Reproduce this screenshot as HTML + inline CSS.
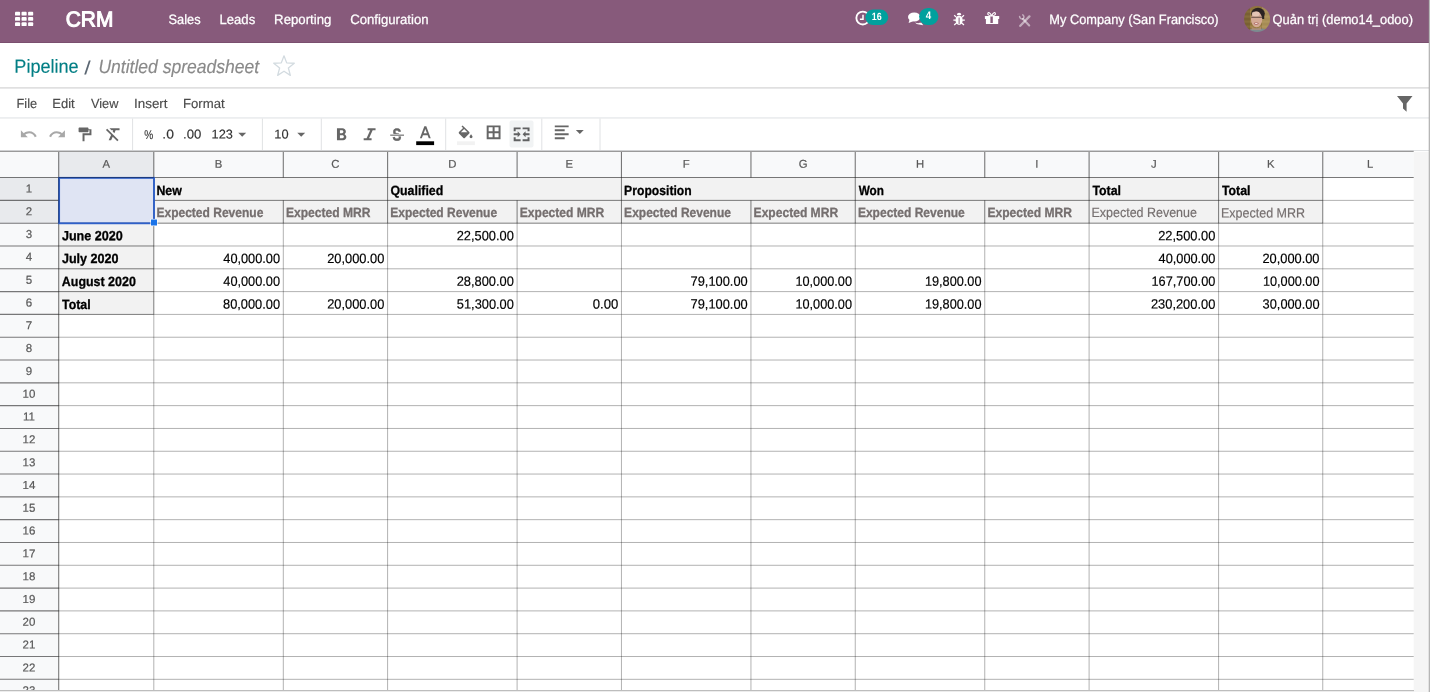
<!DOCTYPE html>
<html lang="en"><head><meta charset="utf-8"><title>Odoo - Untitled spreadsheet</title>
<style>
*{box-sizing:border-box}
html,body{margin:0;padding:0}
body{width:1430px;height:692px;overflow:hidden;background:#fff;position:relative;font-family:"Liberation Sans","DejaVu Sans",sans-serif;font-size:13px}
#app{position:absolute;left:0;top:0;width:1430px;height:692px;will-change:transform}
.t{position:absolute;white-space:nowrap;line-height:normal;transform-origin:0 0;display:block}
.ov{position:absolute;left:0;top:0;display:block;pointer-events:none}
.navbar{position:absolute;left:0;top:0;width:1429px;height:43px;background:#875a7b;border-bottom:1px solid #7a4f6f}
.badge{position:absolute;color:#fff;font-weight:bold;font-size:9.5px;white-space:nowrap;transform-origin:0 0}
.cp{position:absolute;left:0;top:43px;width:1429px;height:45px;background:#fff}
.cp-line{position:absolute;left:0;top:87px;width:1429px;height:2px;background:linear-gradient(#e0e0e0 0 50%,#e8e8e9 50% 100%)}
.menubar{position:absolute;left:0;top:88px;width:1429px;height:30px}
.menubar-line{position:absolute;left:0;top:117px;width:1429px;height:2px;background:linear-gradient(#eceef0 0 50%,#f0f1f2 50% 100%)}
.toolbar{position:absolute;left:0;top:118px;width:1429px;height:33px}
.toolbar-line{position:absolute;left:0;top:150px;width:1429px;height:1px;background:#e0e2e4}
.grid{position:absolute;left:0;top:150px;display:block}
.edge-r{position:absolute;left:1428px;top:0;width:2px;height:692px;background:linear-gradient(90deg,rgba(150,150,150,.22) 0 50%,#b6b6b6 50% 100%)}
.edge-t{position:absolute;left:1414px;top:690px;width:15px;height:2px;background:#f5f5f5}
.edge-b{position:absolute;left:0;top:690px;width:1414px;height:2px;background:linear-gradient(#bdbdbd 0 50%,#ececec 50% 100%)}
</style></head>
<body>
<div id="app">
<header class="navbar">
<svg class="ov" width="1430" height="43" viewBox="0 0 1430 43">
<rect x="15.0" y="11.8" width="5.1" height="3.8" rx="0.9" fill="#fff"/>
<rect x="15.0" y="17.05" width="5.1" height="3.8" rx="0.9" fill="#fff"/>
<rect x="15.0" y="22.3" width="5.1" height="3.8" rx="0.9" fill="#fff"/>
<rect x="21.55" y="11.8" width="5.1" height="3.8" rx="0.9" fill="#fff"/>
<rect x="21.55" y="17.05" width="5.1" height="3.8" rx="0.9" fill="#fff"/>
<rect x="21.55" y="22.3" width="5.1" height="3.8" rx="0.9" fill="#fff"/>
<rect x="28.1" y="11.8" width="5.1" height="3.8" rx="0.9" fill="#fff"/>
<rect x="28.1" y="17.05" width="5.1" height="3.8" rx="0.9" fill="#fff"/>
<rect x="28.1" y="22.3" width="5.1" height="3.8" rx="0.9" fill="#fff"/>
<circle cx="862.8" cy="18" r="6.45" fill="none" stroke="#fff" stroke-width="1.85"/>
<path d="M863 14.8V19.2H859.9" fill="none" stroke="#fff" stroke-width="1.5"/>
<rect x="865.4" y="9.6" width="22.8" height="15.5" rx="7.75" fill="#00a09d"/>
<g fill="#fff"><ellipse cx="914.2" cy="17" rx="6.2" ry="4.6"/><path d="M909.6 19.5 L908.6 23 L913 21.2Z"/><path d="M915 22.6 C917 23.4 920 23.2 921.2 22.6 L923.3 25.2 L919 24.6 C917.5 24.6 916 23.8 915 22.6Z"/></g>
<rect x="919.1" y="8.0" width="19.3" height="17.1" rx="8.6" fill="#00a09d"/>
<g fill="#fff" stroke="#fff"><ellipse cx="959.1" cy="20.2" rx="3.6" ry="4.7" stroke="none"/><path d="M956.9 14.9 a2.2 2.1 0 0 1 4.4 0Z" stroke="none"/><path d="M954.2 15.2 L956.8 17.6 M964 15.2 L961.4 17.6 M953.4 20.2 H956 M962.2 20.2 H964.8 M954.2 24.9 L956.8 22.8 M964 24.9 L961.4 22.8" stroke-width="1.25" fill="none"/><rect x="958.6" y="17.6" width="1.0" height="6.6" fill="#875a7b" stroke="none"/></g>
<g fill="#fff"><rect x="984.9" y="16" width="14.3" height="3.1" rx="0.4"/><rect x="985.9" y="19.1" width="12.3" height="4.8" rx="0.5"/><rect x="990.4" y="16.4" width="2.4" height="6.6" fill="#875a7b"/><path d="M991.6 15.8 C989 15.8 987.6 14.8 987.8 13.5 C988 12 990.2 12 991.6 15.8Z M991.6 15.8 C994.2 15.8 995.6 14.8 995.4 13.5 C995.2 12 993 12 991.6 15.8Z" fill="none" stroke="#fff" stroke-width="1.1"/></g>
<g stroke="#fff" stroke-opacity="0.5" fill="none" stroke-linecap="round"><path d="M1020.3 25.8 L1029.4 16.4" stroke-width="2.3"/><path d="M1023 19 L1029.2 25.4" stroke-width="2.1"/><path d="M1019.6 16.4 a2.4 2.4 0 0 0 3.7 2.1 a2.4 2.4 0 0 0 -0.5 -3.6" stroke-width="1.5"/></g>
<defs><clipPath id="av"><circle cx="1257.1" cy="19" r="13"/></clipPath><filter id="avb" x="-10%" y="-10%" width="120%" height="120%"><feGaussianBlur stdDeviation="0.7"/></filter></defs>
<g clip-path="url(#av)"><g filter="url(#avb)"><rect x="1242" y="4" width="31" height="31" fill="#8f733d"/><rect x="1242" y="10.5" width="31" height="2.2" fill="#b39655" opacity=".5"/><rect x="1242" y="15.5" width="31" height="2.2" fill="#b39655" opacity=".5"/><rect x="1242" y="20.5" width="31" height="2.2" fill="#b39655" opacity=".5"/><rect x="1242" y="25.5" width="31" height="2.2" fill="#b39655" opacity=".5"/><rect x="1262" y="4" width="11" height="31" fill="#c2aa74" opacity=".45"/><rect x="1242" y="4" width="8" height="31" fill="#4f3f22" opacity=".35"/><path d="M1246 35 C1247 29.5 1252 28 1257 28.5 C1263 28 1269 29.5 1272 35Z" fill="#7b8b90"/><ellipse cx="1258" cy="13.4" rx="6.8" ry="5.6" fill="#2b2420"/><rect x="1262" y="13" width="2.2" height="6" fill="#2b2420"/><ellipse cx="1256.6" cy="19.4" rx="5.6" ry="7.8" fill="#d4aa95"/><ellipse cx="1255.8" cy="14.0" rx="3.9" ry="2.4" fill="#e6c8b8" opacity=".9"/><path d="M1251.3 17.3 H1262.4" stroke="#3f322d" stroke-width="1.1" opacity=".7"/><ellipse cx="1256.2" cy="23.6" rx="2.5" ry="1.1" fill="#a85f5f"/><ellipse cx="1256.2" cy="23.4" rx="1.6" ry="0.5" fill="#f2e6e0"/><path d="M1251.6 26.4 C1254 28.8 1258.6 28.8 1261 26.4 L1261 30 L1251.6 30Z" fill="#b89079" opacity=".7"/></g></g>
</svg>
<a class="t brand" style="left:65px;top:6px;font-size:21.6px;color:#fff;transform:translate(0.79px,0.55px) rotate(0.03deg) scaleX(0.9660);-webkit-text-stroke:1.05px #fff">CRM</a>
<nav>
<a class="t" style="left:168px;top:11px;font-size:13.5px;color:#fff;transform:translate(0.51px,0.90px) rotate(0.03deg) scaleX(0.9496);-webkit-text-stroke:0.25px #fff">Sales</a>
<a class="t" style="left:219px;top:11px;font-size:13.5px;color:#fff;transform:translate(0.51px,0.90px) rotate(0.03deg) scaleX(0.9702);-webkit-text-stroke:0.25px #fff">Leads</a>
<a class="t" style="left:274px;top:11px;font-size:13.5px;color:#fff;transform:translate(0.10px,0.90px) rotate(0.03deg) scaleX(0.9784);-webkit-text-stroke:0.25px #fff">Reporting</a>
<a class="t" style="left:350px;top:11px;font-size:13.5px;color:#fff;transform:translate(0.19px,0.90px) rotate(0.03deg) scaleX(0.9762);-webkit-text-stroke:0.25px #fff">Configuration</a>
</nav>
<span class="t" style="left:871px;top:10px;font-size:10.4px;color:#fff;transform:translate(0.81px,0.70px) rotate(0.03deg) scaleX(0.8565);font-weight:bold">16</span>
<span class="t" style="left:925px;top:9px;font-size:10.8px;color:#fff;transform:translate(0.76px,0.00px) rotate(0.03deg) scaleX(0.9021);font-weight:bold">4</span>
<span class="t" style="left:1049px;top:11px;font-size:13.5px;color:#fff;transform:translate(0.33px,0.90px) rotate(0.03deg) scaleX(0.9478);-webkit-text-stroke:0.25px #fff">My Company (San Francisco)</span>
<span class="t" style="left:1272px;top:11px;font-size:13.5px;color:#fff;transform:translate(0.60px,0.90px) rotate(0.03deg) scaleX(0.9545);-webkit-text-stroke:0.25px #fff">Quản trị (demo14_odoo)</span>
</header>
<div class="cp">
</div>
<svg class="ov" width="1430" height="120" viewBox="0 0 1430 120"><polygon points="284.00,55.80 286.70,62.88 294.27,63.26 288.37,68.02 290.35,75.34 284.00,71.20 277.65,75.34 279.63,68.02 273.73,63.26 281.30,62.88" fill="none" stroke="#d3dbe0" stroke-width="1.3" stroke-linejoin="round"/><path d="M1397 96 H1412.5 L1406.6 103.4 V111.7 L1403 108.6 V103.4 Z" fill="#666"/></svg>
<span class="t" style="left:14px;top:55px;font-size:19px;color:#017e84;transform:translate(0.37px,0.80px) rotate(0.03deg) scaleX(0.9510);-webkit-text-stroke:0.15px #017e84">Pipeline</span>
<span class="t" style="left:84px;top:57px;font-size:19px;color:#5c6773;transform:translate(0.20px,0.30px) rotate(0.03deg) scaleX(1.2190)">/</span>
<span class="t" style="left:98px;top:55px;font-size:19px;color:#8a8a8a;transform:translate(0.43px,0.80px) rotate(0.03deg) scaleX(0.9227);-webkit-text-stroke:0.15px #8a8a8a;font-style:italic">Untitled spreadsheet</span>
<div class="cp-line"></div>
<div class="menubar">
</div>
<span class="t" style="left:16px;top:96px;font-size:13.2px;color:#4a4a4a;transform:translate(0.54px,0.10px) rotate(0.03deg) scaleX(0.9682);-webkit-text-stroke:0.15px #4a4a4a">File</span>
<span class="t" style="left:52px;top:96px;font-size:13.2px;color:#4a4a4a;transform:translate(0.32px,0.10px) rotate(0.03deg) scaleX(0.9850);-webkit-text-stroke:0.15px #4a4a4a">Edit</span>
<span class="t" style="left:91px;top:96px;font-size:13.2px;color:#4a4a4a;transform:translate(0.00px,0.10px) rotate(0.03deg) scaleX(0.9656);-webkit-text-stroke:0.15px #4a4a4a">View</span>
<span class="t" style="left:134px;top:96px;font-size:13.2px;color:#4a4a4a;transform:translate(0.06px,0.10px) rotate(0.03deg) scaleX(1.0142);-webkit-text-stroke:0.15px #4a4a4a">Insert</span>
<span class="t" style="left:183px;top:96px;font-size:13.2px;color:#4a4a4a;transform:translate(0.00px,0.10px) rotate(0.03deg) scaleX(0.9969);-webkit-text-stroke:0.15px #4a4a4a">Format</span>
<div class="menubar-line"></div>
<div class="toolbar"></div>
<svg class="ov" style="top:118px" width="1430" height="33" viewBox="0 118 1430 33">
<rect x="509.5" y="120.4" width="24" height="27.2" rx="2" fill="#f1f3f4"/>
<g transform="translate(19.9 125.4) scale(0.99)" fill="#000" fill-opacity="0.34"><path d="M11.5656391,4.43436088 L9,7 L16,7 L16,0 L13.0418424,2.95815758 C11.5936787,1.73635959 9.72260775,1 7.67955083,1 C4.22126258,1 1.25575599,3.10984908 0,6 L2,7 C2.93658775,4.60974406 5.12943697,3.08011229 7.67955083,3 C9.14881247,3.0528747 10.4994783,3.57862053 11.5656391,4.43436088 Z" transform="matrix(-1 0 0 1 17 5)"/></g>
<g transform="translate(48.1 125.4) scale(0.99)" fill="#000" fill-opacity="0.34"><path d="M11.5656391,4.43436088 L9,7 L16,7 L16,0 L13.0418424,2.95815758 C11.5936787,1.73635959 9.72260775,1 7.67955083,1 C4.22126258,1 1.25575599,3.10984908 0,6 L2,7 C2.93658775,4.60974406 5.12943697,3.08011229 7.67955083,3 C9.14881247,3.0528747 10.4994783,3.57862053 11.5656391,4.43436088 Z" transform="translate(1 5)"/></g>
<g transform="translate(75.6 125.4) scale(0.99)" fill="#000" fill-opacity="0.6"><path d="M9,0 L1,0 C0.45,0 0,0.45 0,1 L0,4 C0,4.55 0.45,5 1,5 L9,5 C9.55,5 10,4.55 10,4 L10,3 L11,3 L11,6 L4,6 L4,14 L6,14 L6,8 L13,8 L13,2 L10,2 L10,1 C10,0.45 9.55,0 9,0 Z" transform="translate(3 2)"/></g>
<g transform="translate(103.7 125.4) scale(0.99)" fill="#000" fill-opacity="0.6"><path d="M0.27,1.55 L5.43,6.7 L3,12 L5.5,12 L7.14,8.42 L11.73,13 L13,11.73 L1.55,0.27 L0.27,1.55 Z M3.82,0 L5.82,2 L7.58,2 L7.03,3.21 L8.74,4.92 L10.08,2 L14,2 L14,0 L3.82,0 Z" transform="translate(2 3)"/></g>
<g transform="translate(233.3 125.8) scale(0.99)" fill="#000" fill-opacity="0.6"><polygon points="0 0 4 4 8 0" transform="translate(5 7)"/></g>
<g transform="translate(292.3 125.8) scale(0.99)" fill="#000" fill-opacity="0.6"><polygon points="0 0 4 4 8 0" transform="translate(5 7)"/></g>
<g transform="translate(333.0 125.4) scale(0.99)" fill="#000" fill-opacity="0.6"><path fill-rule="evenodd" d="M9,3.5 C9,1.57 7.43,0 5.5,0 L0,0 L0,12 L6.25,12 C8.04,12 9.5,10.54 9.5,8.75 C9.5,7.45 8.73,6.34 7.63,5.82 C8.46,5.24 9,4.38 9,3.5 Z M5,2 C5.83,2 6.5,2.67 6.5,3.5 C6.5,4.33 5.83,5 5,5 L3,5 L3,2 L5,2 Z M3,10 L3,7 L5.5,7 C6.33,7 7,7.67 7,8.5 C7,9.33 6.33,10 5.5,10 L3,10 Z" transform="translate(4 3)"/></g>
<g transform="translate(360.7 125.4) scale(0.99)" fill="#000" fill-opacity="0.6"><polygon fill-rule="evenodd" points="4 0 4 2 6.58 2 2.92 10 0 10 0 12 8 12 8 10 5.42 10 9.08 2 12 2 12 0" transform="translate(3 3)"/></g>
<text x="397.1" y="140.4" text-anchor="middle" font-family="Liberation Sans, DejaVu Sans, sans-serif" font-weight="bold" font-size="17.2" fill="#666" stroke="#666" stroke-width="0.5" transform="translate(397.1 0) scale(0.78 1) rotate(0.03) translate(-397.1 0)">S</text>
<rect x="390.2" y="133.9" width="13.8" height="2.5" fill="#fff"/>
<rect x="390.2" y="134.6" width="13.8" height="1.1" fill="#666"/>
<g transform="translate(416.4 125.3) scale(0.99)" fill="#000" fill-opacity="0.6"><path d="M7,0 L5,0 L0.5,12 L2.5,12 L3.62,9 L8.37,9 L9.49,12 L11.49,12 L7,0 Z M4.38,7 L6,2.67 L7.62,7 L4.38,7 Z" transform="translate(3 1)"/></g>
<rect x="416.2" y="141.3" width="17.9" height="3.8" fill="#000"/>
<g transform="translate(456.7 125.4) scale(0.99)" fill="#000" fill-opacity="0.6"><path d="M14.5,8.87 C14.5,8.87 13,10.49 13,11.49 C13,12.32 13.67,12.99 14.5,12.99 C15.33,12.99 16,12.32 16,11.49 C16,10.5 14.5,8.87 14.5,8.87 Z M12.71,6.79 L5.91,0 L4.85,1.06 L6.44,2.65 L2.29,6.79 C1.9,7.18 1.9,7.81 2.29,8.2 L6.79,12.7 C6.99,12.9 7.24,13 7.5,13 C7.76,13 8.01,12.9 8.21,12.71 L12.71,8.21 C13.1,7.82 13.1,7.18 12.71,6.79 Z M4.21,7 L7.5,3.71 L10.79,7 L4.21,7 Z"/></g>
<rect x="457.0" y="141.3" width="17.9" height="3.8" fill="#f2f2f2"/>
<g transform="translate(484.7 123.4) scale(0.99)" fill="#000" fill-opacity="0.6"><path d="M0,0 L0,14 L14,14 L14,0 L0,0 Z M6,12 L2,12 L2,8 L6,8 L6,12 Z M6,6 L2,6 L2,2 L6,2 L6,6 Z M12,12 L8,12 L8,8 L12,8 L12,12 Z M12,6 L8,6 L8,2 L12,2 L12,6 Z" transform="translate(2 2)"/></g>
<g transform="translate(512.7 125.4) scale(0.99)" fill="#000" fill-opacity="0.6"><path d="M3,6 L1,6 L1,2 L8,2 L8,4 L3,4 L3,6 Z M10,4 L10,2 L17,2 L17,6 L15,6 L15,4 L10,4 Z M10,14 L15,14 L15,12 L17,12 L17,16 L10,16 L10,14 Z M1,12 L3,12 L3,14 L8,14 L8,16 L1,16 L1,12 Z M1,8 L5,8 L5,6 L8,9 L5,12 L5,10 L1,10 L1,8 Z M10,9 L13,6 L13,8 L17,8 L17,10 L13,10 L13,12 L10,9 Z"/></g>
<g transform="translate(552.8 123.4) scale(0.99)" fill="#000" fill-opacity="0.6"><path d="M0,14 L10,14 L10,12 L0,12 L0,14 Z M10,4 L0,4 L0,6 L10,6 L10,4 Z M0,0 L0,2 L14,2 L14,0 L0,0 Z M0,10 L14,10 L14,8 L0,8 L0,10 Z" transform="translate(2 2)"/></g>
<g transform="translate(570.9 123.0) scale(0.99)" fill="#000" fill-opacity="0.6"><polygon points="0 0 4 4 8 0" transform="translate(5 7)"/></g>
<line x1="132.6" y1="118.5" x2="132.6" y2="150.5" stroke="#e0e2e4" stroke-width="1"/>
<line x1="262.4" y1="118.5" x2="262.4" y2="150.5" stroke="#e0e2e4" stroke-width="1"/>
<line x1="321.3" y1="118.5" x2="321.3" y2="150.5" stroke="#e0e2e4" stroke-width="1"/>
<line x1="445.7" y1="118.5" x2="445.7" y2="150.5" stroke="#e0e2e4" stroke-width="1"/>
<line x1="541.8" y1="118.5" x2="541.8" y2="150.5" stroke="#e0e2e4" stroke-width="1"/>
<line x1="600.0" y1="118.5" x2="600.0" y2="150.5" stroke="#e0e2e4" stroke-width="1"/>
</svg>
<span class="t" style="left:144px;top:126px;font-size:12.8px;color:#333;transform:translate(0.38px,0.50px) rotate(0.03deg) scaleX(0.7905);-webkit-text-stroke:0.15px #333">%</span>
<span class="t" style="left:162px;top:126px;font-size:12.8px;color:#333;transform:translate(0.35px,0.50px) rotate(0.03deg) scaleX(1.0889);-webkit-text-stroke:0.15px #333">.0</span>
<span class="t" style="left:183px;top:126px;font-size:12.8px;color:#333;transform:translate(0.12px,0.50px) rotate(0.03deg) scaleX(1.0295);-webkit-text-stroke:0.15px #333">.00</span>
<span class="t" style="left:211px;top:126px;font-size:12.8px;color:#333;transform:translate(0.60px,0.50px) rotate(0.03deg) scaleX(1.0013);-webkit-text-stroke:0.15px #333">123</span>
<span class="t" style="left:274px;top:126px;font-size:12.8px;color:#333;transform:translate(0.30px,0.50px) rotate(0.03deg) scaleX(1.0019);-webkit-text-stroke:0.15px #333">10</span>
<div class="toolbar-line"></div>
<svg class="grid" width="1430" height="540" viewBox="0 150 1430 540" font-family="Liberation Sans, DejaVu Sans, sans-serif">
<rect x="0" y="151.8" width="1413.7" height="25.769999999999982" fill="#f8f9fa"/>
<rect x="0" y="177.57" width="58.7" height="514.4300000000001" fill="#f8f9fa"/>
<rect x="58.7" y="151.8" width="95.10000000000001" height="25.769999999999982" fill="#e8eaed"/>
<rect x="0" y="177.57" width="58.7" height="45.614" fill="#e8eaed"/>
<rect x="58.7" y="177.57" width="95.10000000000001" height="136.84199999999998" fill="#f2f2f2"/>
<rect x="153.8" y="177.57" width="1168.95" height="45.614" fill="#f2f2f2"/>
<rect x="58.7" y="177.57" width="95.10000000000001" height="45.614" fill="#dfe4f3"/>
<rect x="1413.7" y="151.8" width="15.0" height="540.2" fill="#f5f5f5"/>
<line x1="0" y1="177.57" x2="1413.7" y2="177.57" stroke="#000" stroke-opacity="0.52" stroke-width="1.1"/>
<line x1="0" y1="200.38" x2="58.7" y2="200.38" stroke="#000" stroke-opacity="0.52" stroke-width="1.1"/>
<line x1="153.8" y1="200.38" x2="1322.75" y2="200.38" stroke="#000" stroke-opacity="0.50" stroke-width="1"/>
<line x1="1322.75" y1="200.38" x2="1413.7" y2="200.38" stroke="#000" stroke-opacity="0.56" stroke-width="0.55"/>
<line x1="0" y1="223.18" x2="58.7" y2="223.18" stroke="#000" stroke-opacity="0.52" stroke-width="1.1"/>
<line x1="58.7" y1="223.18" x2="153.8" y2="223.18" stroke="#000" stroke-opacity="0.50" stroke-width="1"/>
<line x1="153.8" y1="223.18" x2="1322.75" y2="223.18" stroke="#000" stroke-opacity="0.50" stroke-width="1"/>
<line x1="1322.75" y1="223.18" x2="1413.7" y2="223.18" stroke="#000" stroke-opacity="0.56" stroke-width="0.55"/>
<line x1="0" y1="245.99" x2="58.7" y2="245.99" stroke="#000" stroke-opacity="0.52" stroke-width="1.1"/>
<line x1="58.7" y1="245.99" x2="153.8" y2="245.99" stroke="#000" stroke-opacity="0.50" stroke-width="1"/>
<line x1="153.8" y1="245.99" x2="1322.75" y2="245.99" stroke="#000" stroke-opacity="0.56" stroke-width="0.55"/>
<line x1="1322.75" y1="245.99" x2="1413.7" y2="245.99" stroke="#000" stroke-opacity="0.56" stroke-width="0.55"/>
<line x1="0" y1="268.80" x2="58.7" y2="268.80" stroke="#000" stroke-opacity="0.52" stroke-width="1.1"/>
<line x1="58.7" y1="268.80" x2="153.8" y2="268.80" stroke="#000" stroke-opacity="0.50" stroke-width="1"/>
<line x1="153.8" y1="268.80" x2="1322.75" y2="268.80" stroke="#000" stroke-opacity="0.56" stroke-width="0.55"/>
<line x1="1322.75" y1="268.80" x2="1413.7" y2="268.80" stroke="#000" stroke-opacity="0.56" stroke-width="0.55"/>
<line x1="0" y1="291.61" x2="58.7" y2="291.61" stroke="#000" stroke-opacity="0.52" stroke-width="1.1"/>
<line x1="58.7" y1="291.61" x2="153.8" y2="291.61" stroke="#000" stroke-opacity="0.50" stroke-width="1"/>
<line x1="153.8" y1="291.61" x2="1322.75" y2="291.61" stroke="#000" stroke-opacity="0.56" stroke-width="0.55"/>
<line x1="1322.75" y1="291.61" x2="1413.7" y2="291.61" stroke="#000" stroke-opacity="0.56" stroke-width="0.55"/>
<line x1="0" y1="314.41" x2="58.7" y2="314.41" stroke="#000" stroke-opacity="0.52" stroke-width="1.1"/>
<line x1="58.7" y1="314.41" x2="153.8" y2="314.41" stroke="#000" stroke-opacity="0.50" stroke-width="1"/>
<line x1="153.8" y1="314.41" x2="1322.75" y2="314.41" stroke="#000" stroke-opacity="0.56" stroke-width="0.55"/>
<line x1="1322.75" y1="314.41" x2="1413.7" y2="314.41" stroke="#000" stroke-opacity="0.56" stroke-width="0.55"/>
<line x1="0" y1="337.22" x2="58.7" y2="337.22" stroke="#000" stroke-opacity="0.52" stroke-width="1.1"/>
<line x1="58.7" y1="337.22" x2="1413.7" y2="337.22" stroke="#000" stroke-opacity="0.56" stroke-width="0.55"/>
<line x1="0" y1="360.03" x2="58.7" y2="360.03" stroke="#000" stroke-opacity="0.52" stroke-width="1.1"/>
<line x1="58.7" y1="360.03" x2="1413.7" y2="360.03" stroke="#000" stroke-opacity="0.56" stroke-width="0.55"/>
<line x1="0" y1="382.83" x2="58.7" y2="382.83" stroke="#000" stroke-opacity="0.52" stroke-width="1.1"/>
<line x1="58.7" y1="382.83" x2="1413.7" y2="382.83" stroke="#000" stroke-opacity="0.56" stroke-width="0.55"/>
<line x1="0" y1="405.64" x2="58.7" y2="405.64" stroke="#000" stroke-opacity="0.52" stroke-width="1.1"/>
<line x1="58.7" y1="405.64" x2="1413.7" y2="405.64" stroke="#000" stroke-opacity="0.56" stroke-width="0.55"/>
<line x1="0" y1="428.45" x2="58.7" y2="428.45" stroke="#000" stroke-opacity="0.52" stroke-width="1.1"/>
<line x1="58.7" y1="428.45" x2="1413.7" y2="428.45" stroke="#000" stroke-opacity="0.56" stroke-width="0.55"/>
<line x1="0" y1="451.25" x2="58.7" y2="451.25" stroke="#000" stroke-opacity="0.52" stroke-width="1.1"/>
<line x1="58.7" y1="451.25" x2="1413.7" y2="451.25" stroke="#000" stroke-opacity="0.56" stroke-width="0.55"/>
<line x1="0" y1="474.06" x2="58.7" y2="474.06" stroke="#000" stroke-opacity="0.52" stroke-width="1.1"/>
<line x1="58.7" y1="474.06" x2="1413.7" y2="474.06" stroke="#000" stroke-opacity="0.56" stroke-width="0.55"/>
<line x1="0" y1="496.87" x2="58.7" y2="496.87" stroke="#000" stroke-opacity="0.52" stroke-width="1.1"/>
<line x1="58.7" y1="496.87" x2="1413.7" y2="496.87" stroke="#000" stroke-opacity="0.56" stroke-width="0.55"/>
<line x1="0" y1="519.67" x2="58.7" y2="519.67" stroke="#000" stroke-opacity="0.52" stroke-width="1.1"/>
<line x1="58.7" y1="519.67" x2="1413.7" y2="519.67" stroke="#000" stroke-opacity="0.56" stroke-width="0.55"/>
<line x1="0" y1="542.48" x2="58.7" y2="542.48" stroke="#000" stroke-opacity="0.52" stroke-width="1.1"/>
<line x1="58.7" y1="542.48" x2="1413.7" y2="542.48" stroke="#000" stroke-opacity="0.56" stroke-width="0.55"/>
<line x1="0" y1="565.29" x2="58.7" y2="565.29" stroke="#000" stroke-opacity="0.52" stroke-width="1.1"/>
<line x1="58.7" y1="565.29" x2="1413.7" y2="565.29" stroke="#000" stroke-opacity="0.56" stroke-width="0.55"/>
<line x1="0" y1="588.10" x2="58.7" y2="588.10" stroke="#000" stroke-opacity="0.52" stroke-width="1.1"/>
<line x1="58.7" y1="588.10" x2="1413.7" y2="588.10" stroke="#000" stroke-opacity="0.56" stroke-width="0.55"/>
<line x1="0" y1="610.90" x2="58.7" y2="610.90" stroke="#000" stroke-opacity="0.52" stroke-width="1.1"/>
<line x1="58.7" y1="610.90" x2="1413.7" y2="610.90" stroke="#000" stroke-opacity="0.56" stroke-width="0.55"/>
<line x1="0" y1="633.71" x2="58.7" y2="633.71" stroke="#000" stroke-opacity="0.52" stroke-width="1.1"/>
<line x1="58.7" y1="633.71" x2="1413.7" y2="633.71" stroke="#000" stroke-opacity="0.56" stroke-width="0.55"/>
<line x1="0" y1="656.52" x2="58.7" y2="656.52" stroke="#000" stroke-opacity="0.52" stroke-width="1.1"/>
<line x1="58.7" y1="656.52" x2="1413.7" y2="656.52" stroke="#000" stroke-opacity="0.56" stroke-width="0.55"/>
<line x1="0" y1="679.32" x2="58.7" y2="679.32" stroke="#000" stroke-opacity="0.52" stroke-width="1.1"/>
<line x1="58.7" y1="679.32" x2="1413.7" y2="679.32" stroke="#000" stroke-opacity="0.56" stroke-width="0.55"/>
<line x1="58.7" y1="151.8" x2="58.7" y2="177.57" stroke="#000" stroke-opacity="0.52" stroke-width="1.1"/>
<line x1="58.7" y1="177.57" x2="58.7" y2="692" stroke="#000" stroke-opacity="0.52" stroke-width="1.1"/>
<line x1="153.8" y1="151.8" x2="153.8" y2="177.57" stroke="#000" stroke-opacity="0.52" stroke-width="1.1"/>
<line x1="153.8" y1="177.57" x2="153.8" y2="200.38" stroke="#000" stroke-opacity="0.50" stroke-width="1"/>
<line x1="153.8" y1="200.38" x2="153.8" y2="223.18" stroke="#000" stroke-opacity="0.50" stroke-width="1"/>
<line x1="153.8" y1="223.18" x2="153.8" y2="314.41" stroke="#000" stroke-opacity="0.50" stroke-width="1"/>
<line x1="153.8" y1="314.41" x2="153.8" y2="692" stroke="#000" stroke-opacity="0.56" stroke-width="0.55"/>
<line x1="283.3" y1="151.8" x2="283.3" y2="177.57" stroke="#000" stroke-opacity="0.52" stroke-width="1.1"/>
<line x1="283.3" y1="200.38" x2="283.3" y2="223.18" stroke="#000" stroke-opacity="0.50" stroke-width="1"/>
<line x1="283.3" y1="223.18" x2="283.3" y2="314.41" stroke="#000" stroke-opacity="0.56" stroke-width="0.55"/>
<line x1="283.3" y1="314.41" x2="283.3" y2="692" stroke="#000" stroke-opacity="0.56" stroke-width="0.55"/>
<line x1="387.6" y1="151.8" x2="387.6" y2="177.57" stroke="#000" stroke-opacity="0.52" stroke-width="1.1"/>
<line x1="387.6" y1="177.57" x2="387.6" y2="200.38" stroke="#000" stroke-opacity="0.50" stroke-width="1"/>
<line x1="387.6" y1="200.38" x2="387.6" y2="223.18" stroke="#000" stroke-opacity="0.50" stroke-width="1"/>
<line x1="387.6" y1="223.18" x2="387.6" y2="314.41" stroke="#000" stroke-opacity="0.56" stroke-width="0.55"/>
<line x1="387.6" y1="314.41" x2="387.6" y2="692" stroke="#000" stroke-opacity="0.56" stroke-width="0.55"/>
<line x1="517.1" y1="151.8" x2="517.1" y2="177.57" stroke="#000" stroke-opacity="0.52" stroke-width="1.1"/>
<line x1="517.1" y1="200.38" x2="517.1" y2="223.18" stroke="#000" stroke-opacity="0.50" stroke-width="1"/>
<line x1="517.1" y1="223.18" x2="517.1" y2="314.41" stroke="#000" stroke-opacity="0.56" stroke-width="0.55"/>
<line x1="517.1" y1="314.41" x2="517.1" y2="692" stroke="#000" stroke-opacity="0.56" stroke-width="0.55"/>
<line x1="621.45" y1="151.8" x2="621.45" y2="177.57" stroke="#000" stroke-opacity="0.52" stroke-width="1.1"/>
<line x1="621.45" y1="177.57" x2="621.45" y2="200.38" stroke="#000" stroke-opacity="0.50" stroke-width="1"/>
<line x1="621.45" y1="200.38" x2="621.45" y2="223.18" stroke="#000" stroke-opacity="0.50" stroke-width="1"/>
<line x1="621.45" y1="223.18" x2="621.45" y2="314.41" stroke="#000" stroke-opacity="0.56" stroke-width="0.55"/>
<line x1="621.45" y1="314.41" x2="621.45" y2="692" stroke="#000" stroke-opacity="0.56" stroke-width="0.55"/>
<line x1="750.95" y1="151.8" x2="750.95" y2="177.57" stroke="#000" stroke-opacity="0.52" stroke-width="1.1"/>
<line x1="750.95" y1="200.38" x2="750.95" y2="223.18" stroke="#000" stroke-opacity="0.50" stroke-width="1"/>
<line x1="750.95" y1="223.18" x2="750.95" y2="314.41" stroke="#000" stroke-opacity="0.56" stroke-width="0.55"/>
<line x1="750.95" y1="314.41" x2="750.95" y2="692" stroke="#000" stroke-opacity="0.56" stroke-width="0.55"/>
<line x1="855.25" y1="151.8" x2="855.25" y2="177.57" stroke="#000" stroke-opacity="0.52" stroke-width="1.1"/>
<line x1="855.25" y1="177.57" x2="855.25" y2="200.38" stroke="#000" stroke-opacity="0.50" stroke-width="1"/>
<line x1="855.25" y1="200.38" x2="855.25" y2="223.18" stroke="#000" stroke-opacity="0.50" stroke-width="1"/>
<line x1="855.25" y1="223.18" x2="855.25" y2="314.41" stroke="#000" stroke-opacity="0.56" stroke-width="0.55"/>
<line x1="855.25" y1="314.41" x2="855.25" y2="692" stroke="#000" stroke-opacity="0.56" stroke-width="0.55"/>
<line x1="984.75" y1="151.8" x2="984.75" y2="177.57" stroke="#000" stroke-opacity="0.52" stroke-width="1.1"/>
<line x1="984.75" y1="200.38" x2="984.75" y2="223.18" stroke="#000" stroke-opacity="0.50" stroke-width="1"/>
<line x1="984.75" y1="223.18" x2="984.75" y2="314.41" stroke="#000" stroke-opacity="0.56" stroke-width="0.55"/>
<line x1="984.75" y1="314.41" x2="984.75" y2="692" stroke="#000" stroke-opacity="0.56" stroke-width="0.55"/>
<line x1="1089.1" y1="151.8" x2="1089.1" y2="177.57" stroke="#000" stroke-opacity="0.52" stroke-width="1.1"/>
<line x1="1089.1" y1="177.57" x2="1089.1" y2="200.38" stroke="#000" stroke-opacity="0.50" stroke-width="1"/>
<line x1="1089.1" y1="200.38" x2="1089.1" y2="223.18" stroke="#000" stroke-opacity="0.50" stroke-width="1"/>
<line x1="1089.1" y1="223.18" x2="1089.1" y2="314.41" stroke="#000" stroke-opacity="0.56" stroke-width="0.55"/>
<line x1="1089.1" y1="314.41" x2="1089.1" y2="692" stroke="#000" stroke-opacity="0.56" stroke-width="0.55"/>
<line x1="1218.6" y1="151.8" x2="1218.6" y2="177.57" stroke="#000" stroke-opacity="0.52" stroke-width="1.1"/>
<line x1="1218.6" y1="177.57" x2="1218.6" y2="200.38" stroke="#000" stroke-opacity="0.50" stroke-width="1"/>
<line x1="1218.6" y1="200.38" x2="1218.6" y2="223.18" stroke="#000" stroke-opacity="0.50" stroke-width="1"/>
<line x1="1218.6" y1="223.18" x2="1218.6" y2="314.41" stroke="#000" stroke-opacity="0.56" stroke-width="0.55"/>
<line x1="1218.6" y1="314.41" x2="1218.6" y2="692" stroke="#000" stroke-opacity="0.56" stroke-width="0.55"/>
<line x1="1322.75" y1="151.8" x2="1322.75" y2="177.57" stroke="#000" stroke-opacity="0.52" stroke-width="1.1"/>
<line x1="1322.75" y1="177.57" x2="1322.75" y2="200.38" stroke="#000" stroke-opacity="0.50" stroke-width="1"/>
<line x1="1322.75" y1="200.38" x2="1322.75" y2="223.18" stroke="#000" stroke-opacity="0.50" stroke-width="1"/>
<line x1="1322.75" y1="223.18" x2="1322.75" y2="314.41" stroke="#000" stroke-opacity="0.56" stroke-width="0.55"/>
<line x1="1322.75" y1="314.41" x2="1322.75" y2="692" stroke="#000" stroke-opacity="0.56" stroke-width="0.55"/>
<line x1="0" y1="151.4" x2="1413.7" y2="151.4" stroke="#9a9a9a" stroke-width="1.1"/>
<rect x="59.1" y="177.87" width="94.9" height="45.413999999999994" fill="none" stroke="#2f60c8" stroke-width="1.9"/>
<line x1="58.7" y1="177.57" x2="153.8" y2="177.57" stroke="#000" stroke-opacity="0.38" stroke-width="1.1"/>
<line x1="58.7" y1="177.57" x2="58.7" y2="223.184" stroke="#000" stroke-opacity="0.3" stroke-width="1.1"/>
<rect x="150.4" y="218.9" width="7.2" height="7.2" fill="#fff"/>
<rect x="151.0" y="219.5" width="6.0" height="6.0" fill="#1a73e8"/>
<text x="156.44" y="194.57" transform="rotate(0.03 156.44 194.57)" textLength="25.42" lengthAdjust="spacingAndGlyphs" font-size="13.4" fill="#000" font-weight="bold" stroke="#000" stroke-width="0.3">New</text>
<text x="390.47" y="194.57" transform="rotate(0.03 390.47 194.57)" textLength="52.80" lengthAdjust="spacingAndGlyphs" font-size="13.4" fill="#000" font-weight="bold" stroke="#000" stroke-width="0.3">Qualified</text>
<text x="624.10" y="194.57" transform="rotate(0.03 624.10 194.57)" textLength="67.59" lengthAdjust="spacingAndGlyphs" font-size="13.4" fill="#000" font-weight="bold" stroke="#000" stroke-width="0.3">Proposition</text>
<text x="858.69" y="194.57" transform="rotate(0.03 858.69 194.57)" textLength="25.26" lengthAdjust="spacingAndGlyphs" font-size="13.4" fill="#000" font-weight="bold" stroke="#000" stroke-width="0.3">Won</text>
<text x="1092.43" y="194.57" transform="rotate(0.03 1092.43 194.57)" textLength="28.62" lengthAdjust="spacingAndGlyphs" font-size="13.4" fill="#000" font-weight="bold" stroke="#000" stroke-width="0.3">Total</text>
<text x="1221.93" y="194.57" transform="rotate(0.03 1221.93 194.57)" textLength="28.62" lengthAdjust="spacingAndGlyphs" font-size="13.4" fill="#000" font-weight="bold" stroke="#000" stroke-width="0.3">Total</text>
<text x="156.46" y="217.38" transform="rotate(0.03 156.46 217.38)" textLength="106.88" lengthAdjust="spacingAndGlyphs" font-size="13.4" fill="#756f6f" font-weight="bold" stroke="#756f6f" stroke-width="0.3">Expected Revenue</text>
<text x="285.96" y="217.38" transform="rotate(0.03 285.96 217.38)" textLength="84.51" lengthAdjust="spacingAndGlyphs" font-size="13.4" fill="#756f6f" font-weight="bold" stroke="#756f6f" stroke-width="0.3">Expected MRR</text>
<text x="390.26" y="217.38" transform="rotate(0.03 390.26 217.38)" textLength="106.88" lengthAdjust="spacingAndGlyphs" font-size="13.4" fill="#756f6f" font-weight="bold" stroke="#756f6f" stroke-width="0.3">Expected Revenue</text>
<text x="519.76" y="217.38" transform="rotate(0.03 519.76 217.38)" textLength="84.51" lengthAdjust="spacingAndGlyphs" font-size="13.4" fill="#756f6f" font-weight="bold" stroke="#756f6f" stroke-width="0.3">Expected MRR</text>
<text x="624.11" y="217.38" transform="rotate(0.03 624.11 217.38)" textLength="106.88" lengthAdjust="spacingAndGlyphs" font-size="13.4" fill="#756f6f" font-weight="bold" stroke="#756f6f" stroke-width="0.3">Expected Revenue</text>
<text x="753.61" y="217.38" transform="rotate(0.03 753.61 217.38)" textLength="84.51" lengthAdjust="spacingAndGlyphs" font-size="13.4" fill="#756f6f" font-weight="bold" stroke="#756f6f" stroke-width="0.3">Expected MRR</text>
<text x="857.91" y="217.38" transform="rotate(0.03 857.91 217.38)" textLength="106.88" lengthAdjust="spacingAndGlyphs" font-size="13.4" fill="#756f6f" font-weight="bold" stroke="#756f6f" stroke-width="0.3">Expected Revenue</text>
<text x="987.41" y="217.38" transform="rotate(0.03 987.41 217.38)" textLength="84.51" lengthAdjust="spacingAndGlyphs" font-size="13.4" fill="#756f6f" font-weight="bold" stroke="#756f6f" stroke-width="0.3">Expected MRR</text>
<text x="1091.50" y="217.38" transform="rotate(0.03 1091.50 217.38)" textLength="105.42" lengthAdjust="spacingAndGlyphs" font-size="13.4" fill="#756f6f" stroke="#756f6f" stroke-width="0.18">Expected Revenue</text>
<text x="1221.00" y="217.38" transform="rotate(0.03 1221.00 217.38)" textLength="84.06" lengthAdjust="spacingAndGlyphs" font-size="13.4" fill="#756f6f" stroke="#756f6f" stroke-width="0.18">Expected MRR</text>
<text x="61.91" y="240.18" transform="rotate(0.03 61.91 240.18)" textLength="60.90" lengthAdjust="spacingAndGlyphs" font-size="13.4" fill="#000" font-weight="bold" stroke="#000" stroke-width="0.3">June 2020</text>
<text x="61.91" y="262.99" transform="rotate(0.03 61.91 262.99)" textLength="56.64" lengthAdjust="spacingAndGlyphs" font-size="13.4" fill="#000" font-weight="bold" stroke="#000" stroke-width="0.3">July 2020</text>
<text x="61.80" y="285.80" transform="rotate(0.03 61.80 285.80)" textLength="74.00" lengthAdjust="spacingAndGlyphs" font-size="13.4" fill="#000" font-weight="bold" stroke="#000" stroke-width="0.3">August 2020</text>
<text x="62.03" y="308.61" transform="rotate(0.03 62.03 308.61)" textLength="28.62" lengthAdjust="spacingAndGlyphs" font-size="13.4" fill="#000" font-weight="bold" stroke="#000" stroke-width="0.3">Total</text>
<text x="456.73" y="240.18" transform="rotate(0.03 456.73 240.18)" textLength="57.15" lengthAdjust="spacingAndGlyphs" font-size="13.4" fill="#000" stroke="#000" stroke-width="0.18">22,500.00</text>
<text x="1158.23" y="240.18" transform="rotate(0.03 1158.23 240.18)" textLength="57.15" lengthAdjust="spacingAndGlyphs" font-size="13.4" fill="#000" stroke="#000" stroke-width="0.18">22,500.00</text>
<text x="223.29" y="262.99" transform="rotate(0.03 223.29 262.99)" textLength="56.78" lengthAdjust="spacingAndGlyphs" font-size="13.4" fill="#000" stroke="#000" stroke-width="0.18">40,000.00</text>
<text x="327.23" y="262.99" transform="rotate(0.03 327.23 262.99)" textLength="57.15" lengthAdjust="spacingAndGlyphs" font-size="13.4" fill="#000" stroke="#000" stroke-width="0.18">20,000.00</text>
<text x="1158.59" y="262.99" transform="rotate(0.03 1158.59 262.99)" textLength="56.78" lengthAdjust="spacingAndGlyphs" font-size="13.4" fill="#000" stroke="#000" stroke-width="0.18">40,000.00</text>
<text x="1262.38" y="262.99" transform="rotate(0.03 1262.38 262.99)" textLength="57.15" lengthAdjust="spacingAndGlyphs" font-size="13.4" fill="#000" stroke="#000" stroke-width="0.18">20,000.00</text>
<text x="223.29" y="285.80" transform="rotate(0.03 223.29 285.80)" textLength="56.78" lengthAdjust="spacingAndGlyphs" font-size="13.4" fill="#000" stroke="#000" stroke-width="0.18">40,000.00</text>
<text x="456.73" y="285.80" transform="rotate(0.03 456.73 285.80)" textLength="57.15" lengthAdjust="spacingAndGlyphs" font-size="13.4" fill="#000" stroke="#000" stroke-width="0.18">28,800.00</text>
<text x="690.58" y="285.80" transform="rotate(0.03 690.58 285.80)" textLength="57.15" lengthAdjust="spacingAndGlyphs" font-size="13.4" fill="#000" stroke="#000" stroke-width="0.18">79,100.00</text>
<text x="795.45" y="285.80" transform="rotate(0.03 795.45 285.80)" textLength="56.57" lengthAdjust="spacingAndGlyphs" font-size="13.4" fill="#000" stroke="#000" stroke-width="0.18">10,000.00</text>
<text x="924.95" y="285.80" transform="rotate(0.03 924.95 285.80)" textLength="56.57" lengthAdjust="spacingAndGlyphs" font-size="13.4" fill="#000" stroke="#000" stroke-width="0.18">19,800.00</text>
<text x="1151.50" y="285.80" transform="rotate(0.03 1151.50 285.80)" textLength="63.83" lengthAdjust="spacingAndGlyphs" font-size="13.4" fill="#000" stroke="#000" stroke-width="0.18">167,700.00</text>
<text x="1262.95" y="285.80" transform="rotate(0.03 1262.95 285.80)" textLength="56.57" lengthAdjust="spacingAndGlyphs" font-size="13.4" fill="#000" stroke="#000" stroke-width="0.18">10,000.00</text>
<text x="223.05" y="308.61" transform="rotate(0.03 223.05 308.61)" textLength="57.03" lengthAdjust="spacingAndGlyphs" font-size="13.4" fill="#000" stroke="#000" stroke-width="0.18">80,000.00</text>
<text x="327.23" y="308.61" transform="rotate(0.03 327.23 308.61)" textLength="57.15" lengthAdjust="spacingAndGlyphs" font-size="13.4" fill="#000" stroke="#000" stroke-width="0.18">20,000.00</text>
<text x="456.85" y="308.61" transform="rotate(0.03 456.85 308.61)" textLength="57.03" lengthAdjust="spacingAndGlyphs" font-size="13.4" fill="#000" stroke="#000" stroke-width="0.18">51,300.00</text>
<text x="592.71" y="308.61" transform="rotate(0.03 592.71 308.61)" textLength="25.52" lengthAdjust="spacingAndGlyphs" font-size="13.4" fill="#000" stroke="#000" stroke-width="0.18">0.00</text>
<text x="690.58" y="308.61" transform="rotate(0.03 690.58 308.61)" textLength="57.15" lengthAdjust="spacingAndGlyphs" font-size="13.4" fill="#000" stroke="#000" stroke-width="0.18">79,100.00</text>
<text x="795.45" y="308.61" transform="rotate(0.03 795.45 308.61)" textLength="56.57" lengthAdjust="spacingAndGlyphs" font-size="13.4" fill="#000" stroke="#000" stroke-width="0.18">10,000.00</text>
<text x="924.95" y="308.61" transform="rotate(0.03 924.95 308.61)" textLength="56.57" lengthAdjust="spacingAndGlyphs" font-size="13.4" fill="#000" stroke="#000" stroke-width="0.18">19,800.00</text>
<text x="1150.93" y="308.61" transform="rotate(0.03 1150.93 308.61)" textLength="64.40" lengthAdjust="spacingAndGlyphs" font-size="13.4" fill="#000" stroke="#000" stroke-width="0.18">230,200.00</text>
<text x="1262.62" y="308.61" transform="rotate(0.03 1262.62 308.61)" textLength="56.90" lengthAdjust="spacingAndGlyphs" font-size="13.4" fill="#000" stroke="#000" stroke-width="0.18">30,000.00</text>
<text x="106.25" y="167.85" transform="rotate(0.03 106.25 167.85)" text-anchor="middle" font-size="11.3" fill="#585858" stroke="#585858" stroke-width="0.2">A</text>
<text x="218.55" y="167.85" transform="rotate(0.03 218.55 167.85)" text-anchor="middle" font-size="11.3" fill="#585858" stroke="#585858" stroke-width="0.2">B</text>
<text x="335.45" y="167.85" transform="rotate(0.03 335.45 167.85)" text-anchor="middle" font-size="11.3" fill="#585858" stroke="#585858" stroke-width="0.2">C</text>
<text x="452.35" y="167.85" transform="rotate(0.03 452.35 167.85)" text-anchor="middle" font-size="11.3" fill="#585858" stroke="#585858" stroke-width="0.2">D</text>
<text x="569.28" y="167.85" transform="rotate(0.03 569.28 167.85)" text-anchor="middle" font-size="11.3" fill="#585858" stroke="#585858" stroke-width="0.2">E</text>
<text x="686.20" y="167.85" transform="rotate(0.03 686.20 167.85)" text-anchor="middle" font-size="11.3" fill="#585858" stroke="#585858" stroke-width="0.2">F</text>
<text x="803.10" y="167.85" transform="rotate(0.03 803.10 167.85)" text-anchor="middle" font-size="11.3" fill="#585858" stroke="#585858" stroke-width="0.2">G</text>
<text x="920.00" y="167.85" transform="rotate(0.03 920.00 167.85)" text-anchor="middle" font-size="11.3" fill="#585858" stroke="#585858" stroke-width="0.2">H</text>
<text x="1036.92" y="167.85" transform="rotate(0.03 1036.92 167.85)" text-anchor="middle" font-size="11.3" fill="#585858" stroke="#585858" stroke-width="0.2">I</text>
<text x="1153.85" y="167.85" transform="rotate(0.03 1153.85 167.85)" text-anchor="middle" font-size="11.3" fill="#585858" stroke="#585858" stroke-width="0.2">J</text>
<text x="1270.67" y="167.85" transform="rotate(0.03 1270.67 167.85)" text-anchor="middle" font-size="11.3" fill="#585858" stroke="#585858" stroke-width="0.2">K</text>
<text x="1370.22" y="167.85" transform="rotate(0.03 1370.22 167.85)" text-anchor="middle" font-size="11.3" fill="#585858" stroke="#585858" stroke-width="0.2">L</text>
<text x="29.00" y="192.47" transform="rotate(0.03 29.00 192.47)" text-anchor="middle" font-size="11.5" fill="#585858" stroke="#585858" stroke-width="0.2">1</text>
<text x="29.00" y="215.28" transform="rotate(0.03 29.00 215.28)" text-anchor="middle" font-size="11.5" fill="#585858" stroke="#585858" stroke-width="0.2">2</text>
<text x="29.00" y="238.08" transform="rotate(0.03 29.00 238.08)" text-anchor="middle" font-size="11.5" fill="#585858" stroke="#585858" stroke-width="0.2">3</text>
<text x="29.00" y="260.89" transform="rotate(0.03 29.00 260.89)" text-anchor="middle" font-size="11.5" fill="#585858" stroke="#585858" stroke-width="0.2">4</text>
<text x="29.00" y="283.70" transform="rotate(0.03 29.00 283.70)" text-anchor="middle" font-size="11.5" fill="#585858" stroke="#585858" stroke-width="0.2">5</text>
<text x="29.00" y="306.50" transform="rotate(0.03 29.00 306.50)" text-anchor="middle" font-size="11.5" fill="#585858" stroke="#585858" stroke-width="0.2">6</text>
<text x="29.00" y="329.31" transform="rotate(0.03 29.00 329.31)" text-anchor="middle" font-size="11.5" fill="#585858" stroke="#585858" stroke-width="0.2">7</text>
<text x="29.00" y="352.12" transform="rotate(0.03 29.00 352.12)" text-anchor="middle" font-size="11.5" fill="#585858" stroke="#585858" stroke-width="0.2">8</text>
<text x="29.00" y="374.93" transform="rotate(0.03 29.00 374.93)" text-anchor="middle" font-size="11.5" fill="#585858" stroke="#585858" stroke-width="0.2">9</text>
<text x="29.00" y="397.73" transform="rotate(0.03 29.00 397.73)" text-anchor="middle" font-size="11.5" fill="#585858" stroke="#585858" stroke-width="0.2">10</text>
<text x="29.00" y="420.54" transform="rotate(0.03 29.00 420.54)" text-anchor="middle" font-size="11.5" fill="#585858" stroke="#585858" stroke-width="0.2">11</text>
<text x="29.00" y="443.35" transform="rotate(0.03 29.00 443.35)" text-anchor="middle" font-size="11.5" fill="#585858" stroke="#585858" stroke-width="0.2">12</text>
<text x="29.00" y="466.15" transform="rotate(0.03 29.00 466.15)" text-anchor="middle" font-size="11.5" fill="#585858" stroke="#585858" stroke-width="0.2">13</text>
<text x="29.00" y="488.96" transform="rotate(0.03 29.00 488.96)" text-anchor="middle" font-size="11.5" fill="#585858" stroke="#585858" stroke-width="0.2">14</text>
<text x="29.00" y="511.77" transform="rotate(0.03 29.00 511.77)" text-anchor="middle" font-size="11.5" fill="#585858" stroke="#585858" stroke-width="0.2">15</text>
<text x="29.00" y="534.57" transform="rotate(0.03 29.00 534.57)" text-anchor="middle" font-size="11.5" fill="#585858" stroke="#585858" stroke-width="0.2">16</text>
<text x="29.00" y="557.38" transform="rotate(0.03 29.00 557.38)" text-anchor="middle" font-size="11.5" fill="#585858" stroke="#585858" stroke-width="0.2">17</text>
<text x="29.00" y="580.19" transform="rotate(0.03 29.00 580.19)" text-anchor="middle" font-size="11.5" fill="#585858" stroke="#585858" stroke-width="0.2">18</text>
<text x="29.00" y="603.00" transform="rotate(0.03 29.00 603.00)" text-anchor="middle" font-size="11.5" fill="#585858" stroke="#585858" stroke-width="0.2">19</text>
<text x="29.00" y="625.80" transform="rotate(0.03 29.00 625.80)" text-anchor="middle" font-size="11.5" fill="#585858" stroke="#585858" stroke-width="0.2">20</text>
<text x="29.00" y="648.61" transform="rotate(0.03 29.00 648.61)" text-anchor="middle" font-size="11.5" fill="#585858" stroke="#585858" stroke-width="0.2">21</text>
<text x="29.00" y="671.42" transform="rotate(0.03 29.00 671.42)" text-anchor="middle" font-size="11.5" fill="#585858" stroke="#585858" stroke-width="0.2">22</text>
<text x="29.00" y="694.22" transform="rotate(0.03 29.00 694.22)" text-anchor="middle" font-size="11.5" fill="#585858" stroke="#585858" stroke-width="0.2">23</text>
</svg>
<div class="edge-b"></div>
<div class="edge-t"></div>
<div class="edge-r"></div>
</div>
</body></html>
